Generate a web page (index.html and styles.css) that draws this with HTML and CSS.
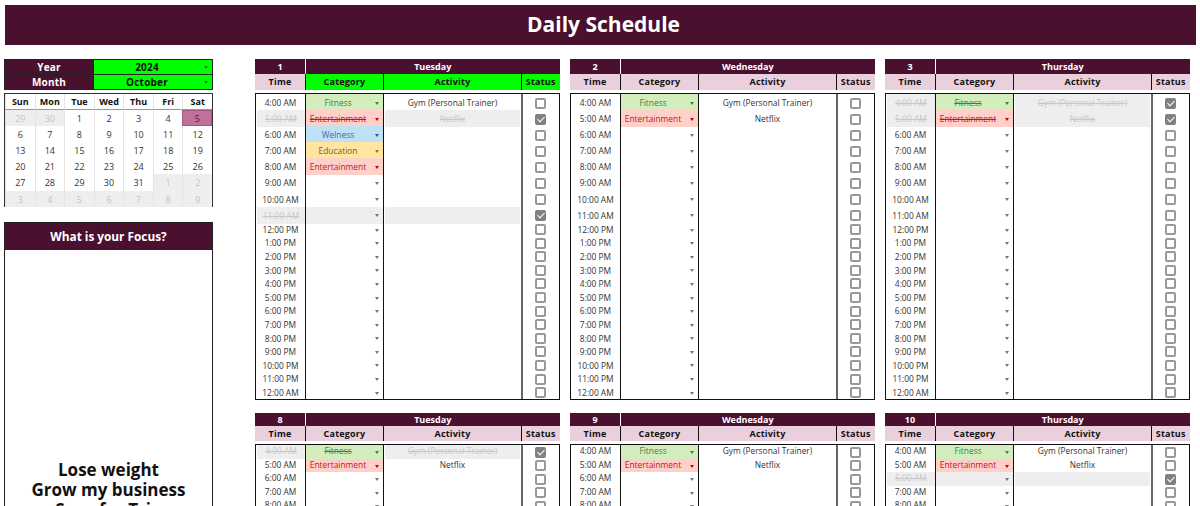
FILE: index.html
```html
<!DOCTYPE html>
<html lang="en">
<head>
  <meta charset="UTF-8" />
  <title>Daily Schedule</title>
  <link rel="stylesheet" href="styles.css">
</head>
<body>

  <h1 class="title">Daily Schedule</h1>

  <div class="page">
    <div class="side">
      <div class="picker">
        <div class="picker-label">Year</div><div class="picker-value">2024</div>
        <div class="picker-label second">Month</div><div class="picker-value second">October</div>
      </div>

      <div class="calendar">
        <b>Sun</b><b>Mon</b><b>Tue</b><b>Wed</b><b>Thu</b><b>Fri</b><b>Sat</b>
        <span class="off">29</span><span class="off">30</span><span>1</span><span>2</span><span>3</span><span>4</span><span class="today">5</span>
        <span>6</span><span>7</span><span>8</span><span>9</span><span>10</span><span>11</span><span>12</span>
        <span>13</span><span>14</span><span>15</span><span>16</span><span>17</span><span>18</span><span>19</span>
        <span>20</span><span>21</span><span>22</span><span>23</span><span>24</span><span>25</span><span>26</span>
        <span>27</span><span>28</span><span>29</span><span>30</span><span>31</span><span class="off">1</span><span class="off">2</span>
        <span class="off">3</span><span class="off">4</span><span class="off">5</span><span class="off">6</span><span class="off">7</span><span class="off">8</span><span class="off">9</span>
      </div>

      <div class="focus">
        <div class="focus-head">What is your Focus?</div>
        <div class="focus-body">
          <p>Lose weight</p>
          <p>Grow my business</p>
          <p>Save for Trip</p>
        </div>
      </div>
    </div>

    <div class="days">

      <div class="day">
        <div class="day-head"><div class="num">1</div><div>Tuesday</div></div>
        <div class="col-head green"><div class="pink">Time</div><div>Category</div><div>Activity</div><div>Status</div></div>
        <div class="rows">
          <div class="row tall"><span class="time">4:00 AM</span><span class="cat fit">Fitness</span><span class="act">Gym (Personal Trainer)</span><span class="st"><i></i></span></div>
          <div class="row tall done"><span class="time">5:00 AM</span><span class="cat ent">Entertainment</span><span class="act">Netflix</span><span class="st"><i></i></span></div>
          <div class="row tall"><span class="time">6:00 AM</span><span class="cat wel">Welness</span><span class="act"></span><span class="st"><i></i></span></div>
          <div class="row tall"><span class="time">7:00 AM</span><span class="cat edu">Education</span><span class="act"></span><span class="st"><i></i></span></div>
          <div class="row tall"><span class="time">8:00 AM</span><span class="cat ent">Entertainment</span><span class="act"></span><span class="st"><i></i></span></div>
          <div class="row tall"><span class="time">9:00 AM</span><span class="cat"></span><span class="act"></span><span class="st"><i></i></span></div>
          <div class="row tall"><span class="time">10:00 AM</span><span class="cat"></span><span class="act"></span><span class="st"><i></i></span></div>
          <div class="row tall done"><span class="time">11:00 AM</span><span class="cat"></span><span class="act"></span><span class="st"><i></i></span></div>
          <div class="row"><span class="time">12:00 PM</span><span class="cat"></span><span class="act"></span><span class="st"><i></i></span></div>
          <div class="row"><span class="time">1:00 PM</span><span class="cat"></span><span class="act"></span><span class="st"><i></i></span></div>
          <div class="row"><span class="time">2:00 PM</span><span class="cat"></span><span class="act"></span><span class="st"><i></i></span></div>
          <div class="row"><span class="time">3:00 PM</span><span class="cat"></span><span class="act"></span><span class="st"><i></i></span></div>
          <div class="row"><span class="time">4:00 PM</span><span class="cat"></span><span class="act"></span><span class="st"><i></i></span></div>
          <div class="row"><span class="time">5:00 PM</span><span class="cat"></span><span class="act"></span><span class="st"><i></i></span></div>
          <div class="row"><span class="time">6:00 PM</span><span class="cat"></span><span class="act"></span><span class="st"><i></i></span></div>
          <div class="row"><span class="time">7:00 PM</span><span class="cat"></span><span class="act"></span><span class="st"><i></i></span></div>
          <div class="row"><span class="time">8:00 PM</span><span class="cat"></span><span class="act"></span><span class="st"><i></i></span></div>
          <div class="row"><span class="time">9:00 PM</span><span class="cat"></span><span class="act"></span><span class="st"><i></i></span></div>
          <div class="row"><span class="time">10:00 PM</span><span class="cat"></span><span class="act"></span><span class="st"><i></i></span></div>
          <div class="row"><span class="time">11:00 PM</span><span class="cat"></span><span class="act"></span><span class="st"><i></i></span></div>
          <div class="row"><span class="time">12:00 AM</span><span class="cat"></span><span class="act"></span><span class="st"><i></i></span></div>
        </div>
      </div>

      <div class="day">
        <div class="day-head"><div class="num">2</div><div>Wednesday</div></div>
        <div class="col-head"><div>Time</div><div>Category</div><div>Activity</div><div>Status</div></div>
        <div class="rows">
          <div class="row tall"><span class="time">4:00 AM</span><span class="cat fit">Fitness</span><span class="act">Gym (Personal Trainer)</span><span class="st"><i></i></span></div>
          <div class="row tall"><span class="time">5:00 AM</span><span class="cat ent">Entertainment</span><span class="act">Netflix</span><span class="st"><i></i></span></div>
          <div class="row tall"><span class="time">6:00 AM</span><span class="cat"></span><span class="act"></span><span class="st"><i></i></span></div>
          <div class="row tall"><span class="time">7:00 AM</span><span class="cat"></span><span class="act"></span><span class="st"><i></i></span></div>
          <div class="row tall"><span class="time">8:00 AM</span><span class="cat"></span><span class="act"></span><span class="st"><i></i></span></div>
          <div class="row tall"><span class="time">9:00 AM</span><span class="cat"></span><span class="act"></span><span class="st"><i></i></span></div>
          <div class="row tall"><span class="time">10:00 AM</span><span class="cat"></span><span class="act"></span><span class="st"><i></i></span></div>
          <div class="row tall"><span class="time">11:00 AM</span><span class="cat"></span><span class="act"></span><span class="st"><i></i></span></div>
          <div class="row"><span class="time">12:00 PM</span><span class="cat"></span><span class="act"></span><span class="st"><i></i></span></div>
          <div class="row"><span class="time">1:00 PM</span><span class="cat"></span><span class="act"></span><span class="st"><i></i></span></div>
          <div class="row"><span class="time">2:00 PM</span><span class="cat"></span><span class="act"></span><span class="st"><i></i></span></div>
          <div class="row"><span class="time">3:00 PM</span><span class="cat"></span><span class="act"></span><span class="st"><i></i></span></div>
          <div class="row"><span class="time">4:00 PM</span><span class="cat"></span><span class="act"></span><span class="st"><i></i></span></div>
          <div class="row"><span class="time">5:00 PM</span><span class="cat"></span><span class="act"></span><span class="st"><i></i></span></div>
          <div class="row"><span class="time">6:00 PM</span><span class="cat"></span><span class="act"></span><span class="st"><i></i></span></div>
          <div class="row"><span class="time">7:00 PM</span><span class="cat"></span><span class="act"></span><span class="st"><i></i></span></div>
          <div class="row"><span class="time">8:00 PM</span><span class="cat"></span><span class="act"></span><span class="st"><i></i></span></div>
          <div class="row"><span class="time">9:00 PM</span><span class="cat"></span><span class="act"></span><span class="st"><i></i></span></div>
          <div class="row"><span class="time">10:00 PM</span><span class="cat"></span><span class="act"></span><span class="st"><i></i></span></div>
          <div class="row"><span class="time">11:00 PM</span><span class="cat"></span><span class="act"></span><span class="st"><i></i></span></div>
          <div class="row"><span class="time">12:00 AM</span><span class="cat"></span><span class="act"></span><span class="st"><i></i></span></div>
        </div>
      </div>

      <div class="day">
        <div class="day-head"><div class="num">3</div><div>Thursday</div></div>
        <div class="col-head"><div>Time</div><div>Category</div><div>Activity</div><div>Status</div></div>
        <div class="rows">
          <div class="row tall done"><span class="time">4:00 AM</span><span class="cat fit">Fitness</span><span class="act">Gym (Personal Trainer)</span><span class="st"><i></i></span></div>
          <div class="row tall done"><span class="time">5:00 AM</span><span class="cat ent">Entertainment</span><span class="act">Netflix</span><span class="st"><i></i></span></div>
          <div class="row tall"><span class="time">6:00 AM</span><span class="cat"></span><span class="act"></span><span class="st"><i></i></span></div>
          <div class="row tall"><span class="time">7:00 AM</span><span class="cat"></span><span class="act"></span><span class="st"><i></i></span></div>
          <div class="row tall"><span class="time">8:00 AM</span><span class="cat"></span><span class="act"></span><span class="st"><i></i></span></div>
          <div class="row tall"><span class="time">9:00 AM</span><span class="cat"></span><span class="act"></span><span class="st"><i></i></span></div>
          <div class="row tall"><span class="time">10:00 AM</span><span class="cat"></span><span class="act"></span><span class="st"><i></i></span></div>
          <div class="row tall"><span class="time">11:00 AM</span><span class="cat"></span><span class="act"></span><span class="st"><i></i></span></div>
          <div class="row"><span class="time">12:00 PM</span><span class="cat"></span><span class="act"></span><span class="st"><i></i></span></div>
          <div class="row"><span class="time">1:00 PM</span><span class="cat"></span><span class="act"></span><span class="st"><i></i></span></div>
          <div class="row"><span class="time">2:00 PM</span><span class="cat"></span><span class="act"></span><span class="st"><i></i></span></div>
          <div class="row"><span class="time">3:00 PM</span><span class="cat"></span><span class="act"></span><span class="st"><i></i></span></div>
          <div class="row"><span class="time">4:00 PM</span><span class="cat"></span><span class="act"></span><span class="st"><i></i></span></div>
          <div class="row"><span class="time">5:00 PM</span><span class="cat"></span><span class="act"></span><span class="st"><i></i></span></div>
          <div class="row"><span class="time">6:00 PM</span><span class="cat"></span><span class="act"></span><span class="st"><i></i></span></div>
          <div class="row"><span class="time">7:00 PM</span><span class="cat"></span><span class="act"></span><span class="st"><i></i></span></div>
          <div class="row"><span class="time">8:00 PM</span><span class="cat"></span><span class="act"></span><span class="st"><i></i></span></div>
          <div class="row"><span class="time">9:00 PM</span><span class="cat"></span><span class="act"></span><span class="st"><i></i></span></div>
          <div class="row"><span class="time">10:00 PM</span><span class="cat"></span><span class="act"></span><span class="st"><i></i></span></div>
          <div class="row"><span class="time">11:00 PM</span><span class="cat"></span><span class="act"></span><span class="st"><i></i></span></div>
          <div class="row"><span class="time">12:00 AM</span><span class="cat"></span><span class="act"></span><span class="st"><i></i></span></div>
        </div>
      </div>

      <div class="day low">
        <div class="day-head"><div class="num">8</div><div>Tuesday</div></div>
        <div class="col-head"><div>Time</div><div>Category</div><div>Activity</div><div>Status</div></div>
        <div class="rows">
          <div class="row done"><span class="time">4:00 AM</span><span class="cat fit">Fitness</span><span class="act">Gym (Personal Trainer)</span><span class="st"><i></i></span></div>
          <div class="row"><span class="time">5:00 AM</span><span class="cat ent">Entertainment</span><span class="act">Netflix</span><span class="st"><i></i></span></div>
          <div class="row"><span class="time">6:00 AM</span><span class="cat"></span><span class="act"></span><span class="st"><i></i></span></div>
          <div class="row"><span class="time">7:00 AM</span><span class="cat"></span><span class="act"></span><span class="st"><i></i></span></div>
          <div class="row"><span class="time">8:00 AM</span><span class="cat"></span><span class="act"></span><span class="st"><i></i></span></div>
        </div>
      </div>

      <div class="day low">
        <div class="day-head"><div class="num">9</div><div>Wednesday</div></div>
        <div class="col-head"><div>Time</div><div>Category</div><div>Activity</div><div>Status</div></div>
        <div class="rows">
          <div class="row"><span class="time">4:00 AM</span><span class="cat fit">Fitness</span><span class="act">Gym (Personal Trainer)</span><span class="st"><i></i></span></div>
          <div class="row"><span class="time">5:00 AM</span><span class="cat ent">Entertainment</span><span class="act">Netflix</span><span class="st"><i></i></span></div>
          <div class="row"><span class="time">6:00 AM</span><span class="cat"></span><span class="act"></span><span class="st"><i></i></span></div>
          <div class="row"><span class="time">7:00 AM</span><span class="cat"></span><span class="act"></span><span class="st"><i></i></span></div>
          <div class="row"><span class="time">8:00 AM</span><span class="cat"></span><span class="act"></span><span class="st"><i></i></span></div>
        </div>
      </div>

      <div class="day low">
        <div class="day-head"><div class="num">10</div><div>Thursday</div></div>
        <div class="col-head"><div>Time</div><div>Category</div><div>Activity</div><div>Status</div></div>
        <div class="rows">
          <div class="row"><span class="time">4:00 AM</span><span class="cat fit">Fitness</span><span class="act">Gym (Personal Trainer)</span><span class="st"><i></i></span></div>
          <div class="row"><span class="time">5:00 AM</span><span class="cat ent">Entertainment</span><span class="act">Netflix</span><span class="st"><i></i></span></div>
          <div class="row done"><span class="time">6:00 AM</span><span class="cat"></span><span class="act"></span><span class="st"><i></i></span></div>
          <div class="row"><span class="time">7:00 AM</span><span class="cat"></span><span class="act"></span><span class="st"><i></i></span></div>
          <div class="row"><span class="time">8:00 AM</span><span class="cat"></span><span class="act"></span><span class="st"><i></i></span></div>
        </div>
      </div>

    </div>
  </div>

</body>
</html>
```

FILE: styles.css
```css
* {
  margin: 0;
  padding: 0;
  box-sizing: border-box;
}

html, body {
  height: 506px;
  overflow: hidden;
}

body {
  font-family: "Open Sans", sans-serif;
  font-size: 9px;
  color: #333;
  background: #fff;
  padding: 5px 4px 0 5px;
}

.title {
  height: 40px;
  line-height: 39px;
  padding-left: 6px;
  background: #4a1030;
  color: #fff;
  font-size: 21px;
  font-weight: 700;
  text-align: center;
}

.page {
  display: flex;
  margin-top: 14px;
  margin-left: -1px;
}

/* left column */

.side {
  width: 209px;
  margin-right: 42px;
  flex: none;
}

.picker {
  display: grid;
  grid-template-columns: 88px 1fr;
  height: 31px;
  border: 1px solid #222;
  font-size: 10px;
  font-weight: 700;
  letter-spacing: 0.2px;
  text-align: center;
  line-height: 14px;
}

.picker-label {
  background: #4a1030;
  color: #fff;
}

.picker-value {
  background: #00ff00;
  color: #111;
  position: relative;
  padding-right: 12px;
  border-left: 1px solid #222;
}

.second {
  border-top: 1px solid #222;
}

.picker-value::after,
.cat::after {
  content: "";
  position: absolute;
  right: 4px;
  top: 50%;
  margin-top: -1px;
  border-left: 2.5px solid transparent;
  border-right: 2.5px solid transparent;
  border-top: 3px solid #777;
}

.picker-value::after {
  border-top-color: #0a8a0a;
}

.calendar {
  display: grid;
  grid-template-columns: repeat(7, 1fr);
  grid-auto-rows: 16.1px;
  margin-top: 3px;
  height: 114px;
  border: 1px solid #333;
  text-align: center;
  line-height: 16px;
}

.calendar b {
  color: #111;
  padding-top: 1px;
  border-bottom: 1px solid #999;
  border-left: 1px solid #e4e4e4;
  line-height: 14px;
}

.calendar span {
  padding-top: 1px;
  border-left: 1px solid #e4e4e4;
}

.calendar .off {
  background: #eeeeee;
  color: #c4c4c4;
}

.calendar .today {
  background: #c0709a;
  border: 1px solid #a05a80;
  padding-top: 0;
  line-height: 15px;
}

.focus {
  margin-top: 15px;
  border: 1px solid #222;
  height: 300px;
}

.focus-head {
  height: 27px;
  line-height: 27px;
  background: #4a1030;
  color: #fff;
  font-size: 11.8px;
  font-weight: 700;
  text-align: center;
}

.focus-body {
  padding-top: 210px;
  font-size: 17px;
  font-weight: 700;
  line-height: 20px;
  color: #111;
  text-align: center;
}

/* schedule */

.days {
  display: grid;
  grid-template-columns: repeat(3, 304.5px);
  column-gap: 10.5px;
  row-gap: 13px;
  align-content: start;
}

.day-head {
  display: grid;
  grid-template-columns: 50px 1fr;
  column-gap: 1px;
  height: 15px;
  line-height: 15px;
  color: #fff;
  font-weight: 700;
  text-align: center;
}

.day-head div {
  background: #4a1030;
}

.col-head {
  display: grid;
  grid-template-columns: 51px 78px 138px 1fr;
  height: 16px;
  line-height: 16px;
  border-bottom: 1px solid #111;
  color: #111;
  font-weight: 700;
  letter-spacing: 0.2px;
  text-align: center;
}

.col-head div {
  background: #ead0dc;
  border-right: 1px solid #111;
}

.col-head div:last-child {
  border-right: 0;
}

.col-head.green div {
  background: #00ff00;
}

.col-head.green .pink {
  background: #ead0dc;
}

.low .day-head {
  height: 13px;
  line-height: 13px;
}

.low .col-head {
  height: 15px;
  line-height: 15px;
}

.low .row {
  height: 13.5px;
  line-height: 12.6px;
}

.rows {
  margin-top: 3px;
  border: 1px solid #111;
}

.row {
  display: grid;
  grid-template-columns: 50px 78px 137px 1fr;
  height: 13.6px;
  line-height: 13.6px;
  font-size: 8.4px;
  text-align: center;
}

.row.tall {
  height: 16.1px;
  line-height: 16.1px;
}

.row.tall span {
  padding-top: 1px;
}

.time {
  border-right: 1px solid #111;
}

.cat {
  position: relative;
  padding-right: 13px;
  border-right: 1px solid #111;
}

.st {
  display: flex;
  align-items: center;
  justify-content: center;
  border-left: 2px solid #666;
}

.st i {
  display: block;
  position: relative;
  width: 11px;
  height: 11px;
  border: 2px solid #999;
  border-radius: 2px;
  background: #fff;
}

.fit {
  background: #d4edbc;
  color: #3f8050;
}

.fit::after {
  border-top-color: #3a8a30;
}

.ent {
  background: #ffcfc9;
  color: #c01818;
}

.ent::after {
  border-top-color: #d00000;
}

.wel {
  background: #bfe1f6;
  color: #3f6aa5;
}

.wel::after {
  border-top-color: #1a5aa0;
}

.edu {
  background: #ffe5a0;
  color: #7a6020;
}

.edu::after {
  border-top-color: #a07810;
}

.done .time,
.done .act {
  background: #eeeeee;
  color: #c8c8c8;
  text-decoration: line-through;
}

.done .cat {
  text-decoration: line-through;
}

.done .cat:empty {
  background: #eeeeee;
}

.done .act {
  margin: 0 1px;
}

.done .time {
  margin-left: 1px;
}

.done .st i {
  background: #808080;
  border-color: #808080;
}

.done .st i::after {
  content: "";
  position: absolute;
  left: 1.5px;
  top: -1px;
  width: 3px;
  height: 6px;
  border: solid #fff;
  border-width: 0 1.5px 1.5px 0;
  transform: rotate(45deg);
}
```
